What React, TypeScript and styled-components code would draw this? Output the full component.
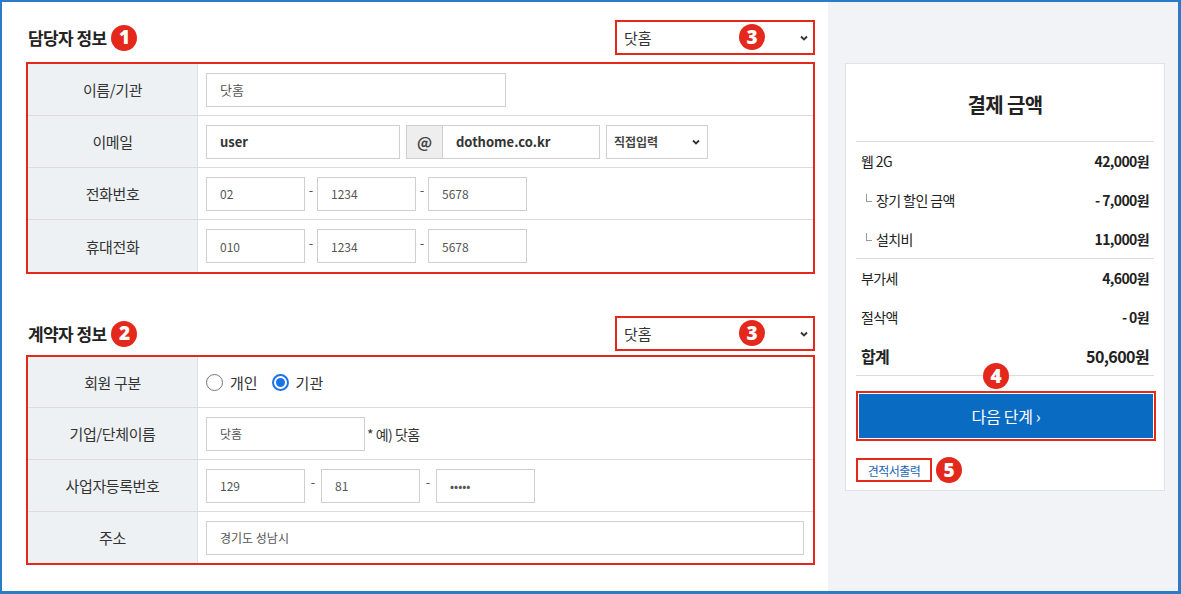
import React from 'react';
import styled, { createGlobalStyle } from 'styled-components';

const RED = '#e4281c';
const BLUE = '#0a6bc3';

const GlobalStyle = createGlobalStyle`
  html, body {
    margin: 0;
    padding: 0;
    background: #fff;
  }
  body {
    font-family: 'Noto Sans CJK KR', 'Noto Sans', sans-serif;
    color: #333;
  }
  * {
    box-sizing: border-box;
  }
`;

const Frame = styled.div`
  width: 1181px;
  height: 594px;
  border-style: solid;
  border-color: #2b7bc6;
  border-width: 2px 3px 3px 2px;
  display: grid;
  grid-template-columns: 826px 1fr;
  overflow: hidden;
`;

const FormPanel = styled.div`
  background: #fff;
  padding: 18px 13px 0 24px;
`;

const SectionHeader = styled.div<{ $top: number }>`
  height: 35px;
  margin-top: ${(p) => p.$top}px;
  display: flex;
  align-items: center;
  justify-content: space-between;
`;

const SectionTitle = styled.h2`
  margin: 0;
  padding-left: 2px;
  display: flex;
  align-items: center;
  gap: 5px;
  font-size: 17px;
  font-weight: 700;
  letter-spacing: -0.6px;
  color: #222;
  line-height: 1;
`;

const Badge = styled.span`
  display: inline-flex;
  align-items: center;
  justify-content: center;
  width: 26px;
  height: 26px;
  border-radius: 50%;
  background: ${RED};
  color: #fff;
  font-family: 'Noto Sans', sans-serif;
  font-size: 19px;
  font-weight: 900;
  line-height: 1;
  letter-spacing: 0;
`;

const FloatBadge = styled(Badge)<{ $left: number; $top: number }>`
  position: absolute;
  left: ${(p) => p.$left}px;
  top: ${(p) => p.$top}px;
`;

const ProfileSelect = styled.div`
  position: relative;
  width: 200px;
  height: 35px;
  border: 2px solid ${RED};
  background: #fff;
  display: flex;
  align-items: center;
  justify-content: space-between;
  padding: 0 4px 0 7px;
  font-size: 15px;
  color: #333;
`;

const Chevron = ({ size = 10 }: { size?: number }) => (
  <svg width={size} height={size} viewBox="0 0 10 10">
    <path d="M2 3.5 L5 6.5 L8 3.5" fill="none" stroke="#333" strokeWidth="1.8" />
  </svg>
);

const Table = styled.div<{ $top: number }>`
  margin-top: ${(p) => p.$top}px;
  border: 2px solid ${RED};
`;

const Row = styled.div<{ $h: number }>`
  display: grid;
  grid-template-columns: 170px 1fr;
  height: ${(p) => p.$h}px;
  border-bottom: 1px solid #dcdcdc;
  &:last-child {
    border-bottom: none;
  }
`;

const Label = styled.div`
  background: #eef1f4;
  border-right: 1px solid #dcdfe3;
  display: flex;
  align-items: center;
  justify-content: center;
  font-size: 15px;
  letter-spacing: -0.4px;
  color: #333;
`;

const Value = styled.div`
  display: flex;
  align-items: center;
  padding-left: 8px;
`;

const Field = styled.div<{ $w: number; $bold?: boolean; $size?: number }>`
  width: ${(p) => p.$w}px;
  height: 34px;
  border: 1px solid #cfcfcf;
  background: #fff;
  display: flex;
  align-items: center;
  padding-left: 13px;
  font-size: ${(p) => p.$size ?? 12}px;
  font-weight: ${(p) => (p.$bold ? 700 : 400)};
  color: ${(p) => (p.$bold ? '#333' : '#555')};
`;

const AtBox = styled.div`
  width: 36px;
  height: 34px;
  margin-left: 6px;
  border: 1px solid #cfcfcf;
  border-right: none;
  background: #eeeeee;
  display: flex;
  align-items: center;
  justify-content: center;
  font-size: 15px;
  font-weight: 700;
  color: #444;
`;

const DomainSelect = styled.div`
  width: 102px;
  height: 34px;
  margin-left: 6px;
  border: 1px solid #cfcfcf;
  display: flex;
  align-items: center;
  justify-content: space-between;
  padding: 0 6px 0 7px;
  font-size: 12px;
  font-weight: 700;
  color: #444;
`;

const Dash = styled.span<{ $wide?: boolean }>`
  width: ${(p) => (p.$wide ? 16 : 12)}px;
  text-align: center;
  font-size: 13px;
  color: #555;
  margin-top: -8px;
`;

const RadioGroup = styled.label`
  display: flex;
  align-items: center;
  gap: 7px;
  margin-right: 14px;
  font-size: 15px;
  color: #333;
`;

const RadioDot = styled.span<{ $on?: boolean }>`
  width: 17px;
  height: 17px;
  border-radius: 50%;
  border: ${(p) => (p.$on ? '2px solid #1a73e8' : '1px solid #767676')};
  display: flex;
  align-items: center;
  justify-content: center;
  &::after {
    content: '';
    display: ${(p) => (p.$on ? 'block' : 'none')};
    width: 9px;
    height: 9px;
    border-radius: 50%;
    background: #1a73e8;
  }
`;

const Hint = styled.span`
  margin-left: 2px;
  font-size: 14px;
  color: #333;
  letter-spacing: -0.5px;
`;

/* summary side */

const SidePanel = styled.div`
  background: #f1f3f6;
  padding: 61px 13px 0 17px;
`;

const Card = styled.div`
  position: relative;
  width: 320px;
  height: 428px;
  background: #fff;
  border: 1px solid #dfe2e6;
  padding: 0 10px;
`;

const CardTitle = styled.h3`
  margin: 0;
  height: 78px;
  padding-top: 4px;
  display: flex;
  align-items: center;
  justify-content: center;
  border-bottom: 1px solid #dcdcdc;
  font-size: 20px;
  font-weight: 700;
  letter-spacing: -0.6px;
  color: #222;
`;

const Group = styled.div`
  border-bottom: 1px solid #dcdcdc;
`;

const Line = styled.div<{ $total?: boolean }>`
  height: 38.7px;
  display: flex;
  align-items: center;
  justify-content: space-between;
  padding: 0 5px;
  font-size: ${(p) => (p.$total ? 16 : 14)}px;
  letter-spacing: -0.6px;
  color: #222;
  b {
    font-weight: 700;
    font-size: ${(p) => (p.$total ? 16 : 14)}px;
  }
  span.name {
    font-weight: ${(p) => (p.$total ? 700 : 400)};
  }
`;

const SubMark = styled.i`
  display: inline-block;
  width: 6px;
  height: 8px;
  margin: 0 4px 4px 5px;
  border-left: 1px solid #999;
  border-bottom: 1px solid #999;
`;

const NextButton = styled.button`
  display: block;
  width: 300px;
  height: 50px;
  margin-top: 15px;
  border: 2px solid ${RED};
  box-shadow: inset 0 0 0 1px #fff;
  background: ${BLUE};
  color: #fff;
  font-family: inherit;
  font-size: 16px;
  letter-spacing: -0.3px;
  cursor: pointer;
`;

const PrintRow = styled.div`
  display: flex;
  align-items: center;
  gap: 4px;
  margin-top: 16px;
`;

const PrintLink = styled.a`
  width: 76px;
  height: 24px;
  border: 2px solid ${RED};
  display: flex;
  align-items: center;
  justify-content: center;
  font-size: 12px;
  letter-spacing: -0.5px;
  color: #1a64b8;
  text-decoration: none;
`;

type Item = { name: string; value: string; sub?: boolean };

const products: Item[] = [
  { name: '웹 2G', value: '42,000원' },
  { name: '장기 할인 금액', value: '- 7,000원', sub: true },
  { name: '설치비', value: '11,000원', sub: true },
];

const extras: Item[] = [
  { name: '부가세', value: '4,600원' },
  { name: '절삭액', value: '- 0원' },
];

const Selector = () => (
  <ProfileSelect>
    <span>닷홈</span>
    <FloatBadge $left={122} $top={2}>3</FloatBadge>
    <Chevron />
  </ProfileSelect>
);

const App: React.FC = () => {
  return (
    <>
      <GlobalStyle />
      <Frame>
        <FormPanel>
          <SectionHeader $top={0}>
            <SectionTitle>
              담당자 정보 <Badge>1</Badge>
            </SectionTitle>
            <Selector />
          </SectionHeader>
          <Table $top={7}>
            <Row $h={52}>
              <Label>이름/기관</Label>
              <Value>
                <Field $w={300} $size={13}>닷홈</Field>
              </Value>
            </Row>
            <Row $h={52}>
              <Label>이메일</Label>
              <Value>
                <Field $w={194} $bold $size={13}>user</Field>
                <AtBox>@</AtBox>
                <Field $w={158} $bold $size={13}>dothome.co.kr</Field>
                <DomainSelect>
                  직접입력
                  <Chevron />
                </DomainSelect>
              </Value>
            </Row>
            <Row $h={52}>
              <Label>전화번호</Label>
              <Value>
                <Field $w={99}>02</Field>
                <Dash>-</Dash>
                <Field $w={99}>1234</Field>
                <Dash>-</Dash>
                <Field $w={99}>5678</Field>
              </Value>
            </Row>
            <Row $h={52}>
              <Label>휴대전화</Label>
              <Value>
                <Field $w={99}>010</Field>
                <Dash>-</Dash>
                <Field $w={99}>1234</Field>
                <Dash>-</Dash>
                <Field $w={99}>5678</Field>
              </Value>
            </Row>
          </Table>

          <SectionHeader $top={42}>
            <SectionTitle>
              계약자 정보 <Badge>2</Badge>
            </SectionTitle>
            <Selector />
          </SectionHeader>
          <Table $top={4}>
            <Row $h={51}>
              <Label>회원 구분</Label>
              <Value>
                <RadioGroup>
                  <RadioDot />
                  개인
                </RadioGroup>
                <RadioGroup>
                  <RadioDot $on />
                  기관
                </RadioGroup>
              </Value>
            </Row>
            <Row $h={52}>
              <Label>기업/단체이름</Label>
              <Value>
                <Field $w={159}>닷홈</Field>
                <Hint>* 예) 닷홈</Hint>
              </Value>
            </Row>
            <Row $h={52}>
              <Label>사업자등록번호</Label>
              <Value>
                <Field $w={99}>129</Field>
                <Dash $wide>-</Dash>
                <Field $w={99}>81</Field>
                <Dash $wide>-</Dash>
                <Field $w={99}>•••••</Field>
              </Value>
            </Row>
            <Row $h={51}>
              <Label>주소</Label>
              <Value>
                <Field $w={598}>경기도 성남시</Field>
              </Value>
            </Row>
          </Table>
        </FormPanel>

        <SidePanel>
          <Card>
            <CardTitle>결제 금액</CardTitle>
            <Group>
              {products.map((it) => (
                <Line key={it.name}>
                  <span className="name">
                    {it.sub && <SubMark />}
                    {it.name}
                  </span>
                  <b>{it.value}</b>
                </Line>
              ))}
            </Group>
            <Group>
              {extras.map((it) => (
                <Line key={it.name}>
                  <span className="name">{it.name}</span>
                  <b>{it.value}</b>
                </Line>
              ))}
              <Line $total>
                <span className="name">합계</span>
                <b>50,600원</b>
              </Line>
            </Group>
            <FloatBadge $left={137} $top={299}>4</FloatBadge>
            <NextButton type="button">다음 단계 ›</NextButton>
            <PrintRow>
              <PrintLink href="#">견적서출력</PrintLink>
              <Badge>5</Badge>
            </PrintRow>
          </Card>
        </SidePanel>
      </Frame>
    </>
  );
};

export default App;
